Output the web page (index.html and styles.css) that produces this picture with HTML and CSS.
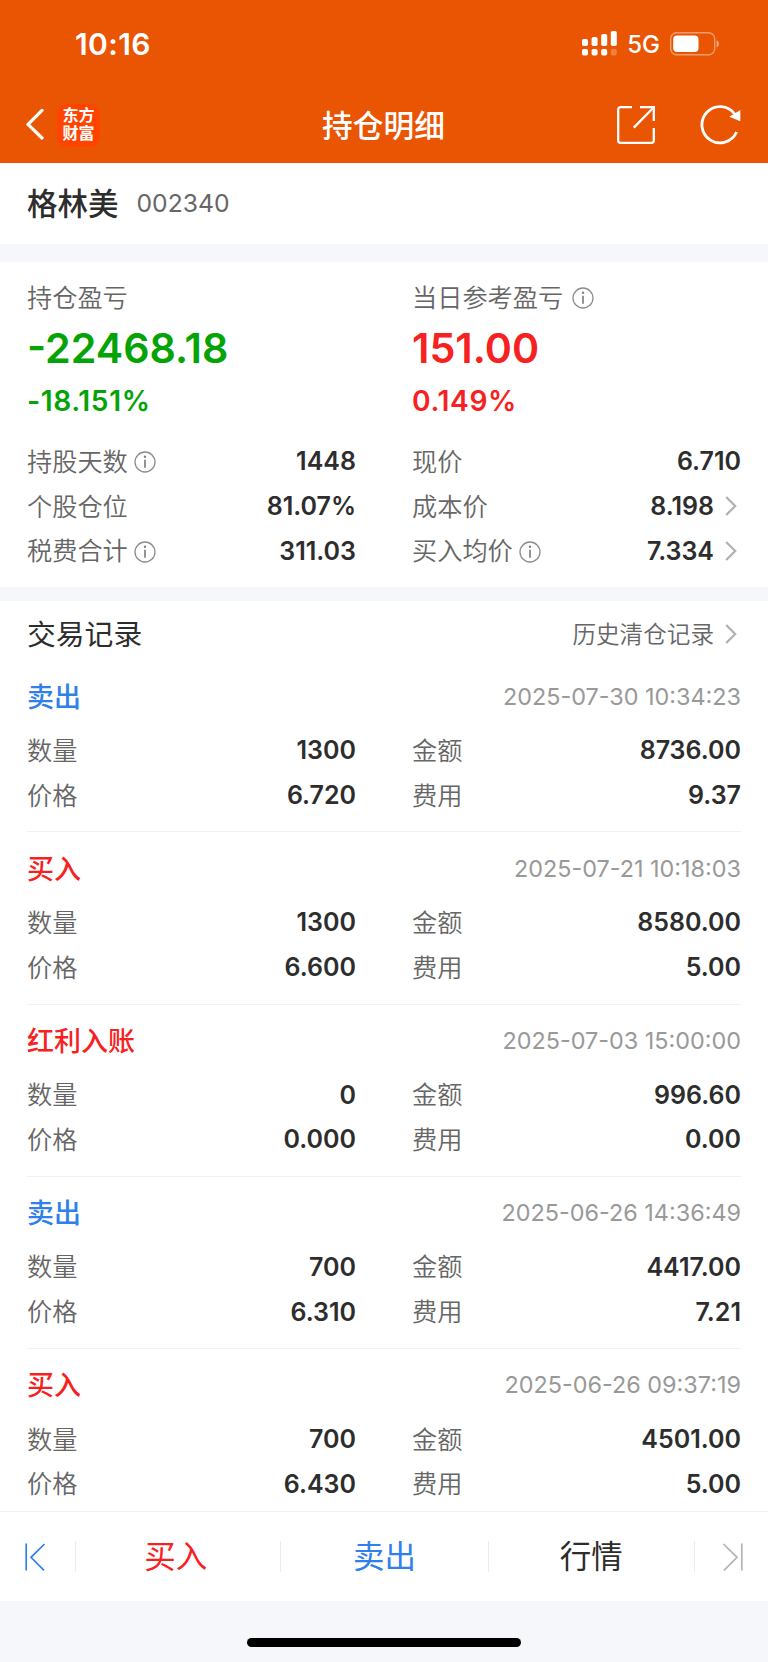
FILE: index.html
```html
<!DOCTYPE html>
<html lang="zh-CN">
<head>
    <meta charset="UTF-8">
    <meta name="viewport" content="width=device-width, initial-scale=1.0">
    <title>持仓明细</title>
    <link rel="stylesheet" href="styles.css">
</head>
<body>
    <!-- icons used more than once -->
    <svg class="sprite" width="0" height="0">
        <symbol id="info" viewBox="0 0 22 22">
            <circle cx="11" cy="11" r="10" fill="none" stroke="#8c8c8c" stroke-width="1.3"/>
            <circle cx="11" cy="5.8" r="1.2" fill="#808080"/>
            <path d="M11 8.8v8" stroke="#808080" stroke-width="1.7"/>
        </symbol>
        <symbol id="arrow" viewBox="0 0 12 20">
            <path d="M1.2 1l9 9-9 9" fill="none" stroke="#b0b0b0" stroke-width="2.2"/>
        </symbol>
    </svg>

    <header class="header">
        <div class="status-bar">
            <span class="time">10:16</span>
            <div class="status-icons">
                <svg class="signal" width="36" height="26" viewBox="0 0 36 26" fill="#fff">
                    <rect x="0" y="8" width="6" height="7" rx="1.8"/>
                    <rect x="9.6" y="6" width="6" height="9" rx="1.8"/>
                    <rect x="19.2" y="3" width="6" height="12" rx="1.8"/>
                    <rect x="28.8" y="0" width="6" height="15" rx="1.8"/>
                    <rect x="0" y="18" width="6" height="6.6" rx="1.8"/>
                    <rect x="9.6" y="18" width="6" height="6.6" rx="1.8"/>
                    <rect x="19.2" y="18" width="6" height="6.6" rx="1.8"/>
                    <rect x="28.8" y="18" width="6" height="6.6" rx="1.8" opacity="0.25"/>
                </svg>
                <span class="network">5G</span>
                <svg class="battery" width="50" height="24" viewBox="0 0 50 24">
                    <rect x="0.7" y="0.7" width="44" height="22" rx="6" fill="none" stroke="#fff" stroke-opacity="0.42" stroke-width="1.4"/>
                    <rect x="3.2" y="3.4" width="25.3" height="16.6" rx="4" fill="#fff"/>
                    <path d="M46.6 8.2c3 1 3 6.2 0 7.2z" fill="#fff" fill-opacity="0.5"/>
                </svg>
            </div>
        </div>
        <div class="nav-bar">
            <div class="nav-left">
                <svg width="20" height="32" viewBox="0 0 20 32">
                    <path d="M17 1.4L3 15.4 17 29" fill="none" stroke="#fff" stroke-width="3.2" stroke-linecap="round" stroke-linejoin="round"/>
                </svg>
                <div class="logo"><span>东方</span><span>财富</span></div>
            </div>
            <h1 class="nav-title">持仓明细</h1>
            <div class="nav-right">
                <svg width="40" height="40" viewBox="0 0 40 40" fill="none" stroke="#fff" stroke-width="2.3">
                    <path d="M16 2.2H4.500a2.300 2.300 0 0 0-2.300 2.300v31a2.300 2.300 0 0 0 2.300 2.300h31a2.300 2.300 0 0 0 2.300-2.300V23"/>
                    <path d="M24 2.200h13.800V16"/>
                    <path d="M37.800 2.200L17.800 22.600"/>
                </svg>
                <svg width="42" height="42" viewBox="0 0 42 42">
                    <path d="M34.600 10A18.100 18.100 0 1 0 36.600 28" fill="none" stroke="#fff" stroke-width="2.800"/>
                    <path d="M40.300 6V17.300L29.300 12.700z" fill="#fff"/>
                </svg>
            </div>
        </div>
    </header>

    <div class="stock">
        <span class="stock-name">格林美</span>
        <span class="stock-code">002340</span>
    </div>

    <section class="summary">
        <div class="columns">
            <div class="profit green">
                <div class="label"><span>持仓盈亏</span></div>
                <div class="amount">-22468.18</div>
                <div class="percent">-18.151%</div>
            </div>
            <div class="profit red">
                <div class="label"><span>当日参考盈亏</span><svg class="info wide"><use href="#info"/></svg></div>
                <div class="amount">151.00</div>
                <div class="percent">0.149%</div>
            </div>
        </div>
        <div class="columns">
            <div class="row"><div class="label"><span>持股天数</span><svg class="info"><use href="#info"/></svg></div><div class="value">1448</div></div>
            <div class="row"><div class="label"><span>现价</span></div><div class="value">6.710</div></div>
            <div class="row"><div class="label"><span>个股仓位</span></div><div class="value">81.07%</div></div>
            <div class="row"><div class="label"><span>成本价</span></div><div class="value">8.198<svg class="arrow"><use href="#arrow"/></svg></div></div>
            <div class="row"><div class="label"><span>税费合计</span><svg class="info"><use href="#info"/></svg></div><div class="value">311.03</div></div>
            <div class="row"><div class="label"><span>买入均价</span><svg class="info"><use href="#info"/></svg></div><div class="value">7.334<svg class="arrow"><use href="#arrow"/></svg></div></div>
        </div>
    </section>

    <section class="records">
        <div class="records-head">
            <h2>交易记录</h2>
            <div class="history"><span>历史清仓记录</span><svg class="arrow"><use href="#arrow"/></svg></div>
        </div>

        <div class="record">
            <div class="record-head"><span class="type blue">卖出</span><span class="date">2025-07-30 10:34:23</span></div>
            <div class="columns">
                <div class="row"><div class="label"><span>数量</span></div><div class="value">1300</div></div>
                <div class="row"><div class="label"><span>金额</span></div><div class="value">8736.00</div></div>
                <div class="row"><div class="label"><span>价格</span></div><div class="value">6.720</div></div>
                <div class="row"><div class="label"><span>费用</span></div><div class="value">9.37</div></div>
            </div>
        </div>

        <div class="record">
            <div class="record-head"><span class="type red">买入</span><span class="date">2025-07-21 10:18:03</span></div>
            <div class="columns">
                <div class="row"><div class="label"><span>数量</span></div><div class="value">1300</div></div>
                <div class="row"><div class="label"><span>金额</span></div><div class="value">8580.00</div></div>
                <div class="row"><div class="label"><span>价格</span></div><div class="value">6.600</div></div>
                <div class="row"><div class="label"><span>费用</span></div><div class="value">5.00</div></div>
            </div>
        </div>

        <div class="record">
            <div class="record-head"><span class="type red">红利入账</span><span class="date">2025-07-03 15:00:00</span></div>
            <div class="columns">
                <div class="row"><div class="label"><span>数量</span></div><div class="value">0</div></div>
                <div class="row"><div class="label"><span>金额</span></div><div class="value">996.60</div></div>
                <div class="row"><div class="label"><span>价格</span></div><div class="value">0.000</div></div>
                <div class="row"><div class="label"><span>费用</span></div><div class="value">0.00</div></div>
            </div>
        </div>

        <div class="record">
            <div class="record-head"><span class="type blue">卖出</span><span class="date">2025-06-26 14:36:49</span></div>
            <div class="columns">
                <div class="row"><div class="label"><span>数量</span></div><div class="value">700</div></div>
                <div class="row"><div class="label"><span>金额</span></div><div class="value">4417.00</div></div>
                <div class="row"><div class="label"><span>价格</span></div><div class="value">6.310</div></div>
                <div class="row"><div class="label"><span>费用</span></div><div class="value">7.21</div></div>
            </div>
        </div>

        <div class="record">
            <div class="record-head"><span class="type red">买入</span><span class="date">2025-06-26 09:37:19</span></div>
            <div class="columns">
                <div class="row"><div class="label"><span>数量</span></div><div class="value">700</div></div>
                <div class="row"><div class="label"><span>金额</span></div><div class="value">4501.00</div></div>
                <div class="row"><div class="label"><span>价格</span></div><div class="value">6.430</div></div>
                <div class="row"><div class="label"><span>费用</span></div><div class="value">5.00</div></div>
            </div>
        </div>
    </section>

    <footer class="footer">
        <div class="tabs">
            <div class="tab">
                <svg width="22" height="28" viewBox="0 0 22 28" fill="none" stroke="#2f80ea" stroke-width="1.7">
                    <path d="M2.2 0.500v27M20.500 1L7 14.300 20 27.300"/>
                </svg>
            </div>
            <div class="tab buy red"><span>买入</span></div>
            <div class="tab blue"><span>卖出</span></div>
            <div class="tab"><span>行情</span></div>
            <div class="tab">
                <svg width="22" height="28" viewBox="0 0 22 28" fill="none" stroke="#b4b4b4" stroke-width="1.7">
                    <path d="M19.800 0.500v27M1.500 1L15 14.300 2 27.300"/>
                </svg>
            </div>
        </div>
        <div class="home-area"><div class="home-bar"></div></div>
    </footer>
</body>
</html>
```
FILE: styles.css
```css
* {
    box-sizing: border-box;
}
body {
    margin: 0;
    width: 768px;
    height: 1662px;
    display: flex;
    flex-direction: column;
    overflow: hidden;
    font-family: Inter, "Noto Sans CJK SC", sans-serif;
    font-size: 25px;
    color: #2d2d2d;
    background: #fff;
}
h1, h2 {
    margin: 0;
    font-weight: normal;
}
svg {
    display: block;
    flex: none;
}
.sprite {
    position: absolute;
}
.red { color: #f82121; }
.green { color: #05a305; }
.blue { color: #2f80ea; }

/* header */
.header {
    flex: none;
    height: 163.3px;
    background: #ea5504;
    color: #fff;
}
.status-bar {
    height: 88px;
    display: flex;
    align-items: center;
    justify-content: space-between;
    padding: 0 48px 0 75px;
}
.time {
    font-size: 30px;
    font-weight: 600;
    letter-spacing: 0.4px;
}
.status-icons {
    display: flex;
    align-items: center;
}
.network {
    margin: 1px 10px 0 9px;
    font-size: 24px;
    font-weight: 500;
}
.nav-bar {
    height: 74px;
    display: grid;
    grid-template-columns: 1fr auto 1fr;
    align-items: center;
    padding: 0 26px 0 25px;
}
.nav-left {
    display: flex;
    align-items: center;
    gap: 12px;
}
.logo {
    width: 43px;
    height: 43px;
    padding-bottom: 2px;
    border-radius: 10px;
    background: #ff4400;
    display: flex;
    flex-direction: column;
    align-items: center;
    justify-content: center;
    font-size: 16px;
    font-weight: 700;
    line-height: 18px;
}
.nav-title {
    padding-bottom: 4px;
    font-size: 30.7px;
    font-weight: 500;
}
.nav-right {
    display: flex;
    align-items: center;
    justify-content: flex-end;
    gap: 44px;
}

/* stock name */
.stock {
    flex: none;
    height: 80.7px;
    display: flex;
    align-items: center;
    gap: 18px;
    padding: 0 27px 3px;
}
.stock-name {
    font-size: 30.5px;
    font-weight: 500;
}
.stock-code {
    padding-top: 1px;
    color: #666;
    font-size: 24.7px;
}

/* profit and position */
.summary {
    flex: none;
    height: 357px;
    padding: 14px 27px 0;
    border-top: 18px solid #f5f7fa;
    border-bottom: 14px solid #f5f7fa;
}
.columns {
    display: grid;
    grid-template-columns: 1fr 1fr;
    column-gap: 56px;
}
.label {
    display: flex;
    align-items: center;
    color: #666;
    font-size: 25.2px;
    font-weight: 350;
}
.label span {
    padding-bottom: 3px;
}
.profit {
    height: 163px;
}
.profit .label {
    height: 44px;
}
.amount {
    font-size: 41.2px;
    font-weight: 600;
    line-height: 56px;
}
.percent {
    font-size: 28.2px;
    font-weight: 600;
    line-height: 50px;
    letter-spacing: 0.6px;
}
.info {
    width: 22px;
    height: 22px;
    margin: 2px 0 0 6px;
}
.info.wide {
    margin: 0 0 0 9px;
}
.row {
    height: 44.8px;
    display: flex;
    align-items: center;
    justify-content: space-between;
}
.value {
    display: flex;
    align-items: center;
    font-weight: 600;
}
.arrow {
    width: 12px;
    height: 20px;
    margin: 0 4px 0 11px;
}

/* trade records */
.records {
    flex: 1;
    min-height: 0;
    overflow: hidden;
    padding: 0 27px;
}
.records-head {
    height: 59.3px;
    padding-top: 6px;
    display: flex;
    align-items: center;
    justify-content: space-between;
}
.records-head h2 {
    padding-bottom: 3px;
    font-size: 28.8px;
}
.history {
    display: flex;
    align-items: center;
    color: #666;
    font-size: 23.6px;
    font-weight: 350;
}
.history span {
    padding-bottom: 2px;
}
.record {
    height: 172.2px;
    border-bottom: 1px solid #f2f2f2;
}
.record-head {
    height: 67.6px;
    padding-top: 4px;
    display: flex;
    align-items: center;
    justify-content: space-between;
}
.type {
    padding-bottom: 2px;
    font-size: 27px;
    font-weight: 500;
}
.date {
    color: #999;
    font-size: 23.4px;
}

/* bottom tabs */
.footer {
    flex: none;
    height: 151px;
    background: #f5f7fa;
    border-top: 1px solid #f0f0f0;
}
.tabs {
    height: 89px;
    display: grid;
    grid-template-columns: 74.5px 205.5px 208px 205.5px 74.5px;
    align-items: center;
    background: #fff;
}
.tab {
    height: 31px;
    display: flex;
    align-items: center;
    justify-content: center;
    font-size: 31.5px;
}
.tab span {
    padding-bottom: 5px;
}
.tab.buy {
    padding-right: 4px;
}
.tab + .tab {
    border-left: 1px solid #ececec;
}
.tab:first-child {
    justify-content: flex-start;
    padding-left: 24px;
}
.tab:last-child {
    justify-content: flex-end;
    padding-right: 24px;
}
.home-area {
    height: 61px;
    display: flex;
    justify-content: center;
    padding-top: 37px;
}
.home-bar {
    width: 274px;
    height: 9px;
    border-radius: 5px;
    background: #000;
}
```
